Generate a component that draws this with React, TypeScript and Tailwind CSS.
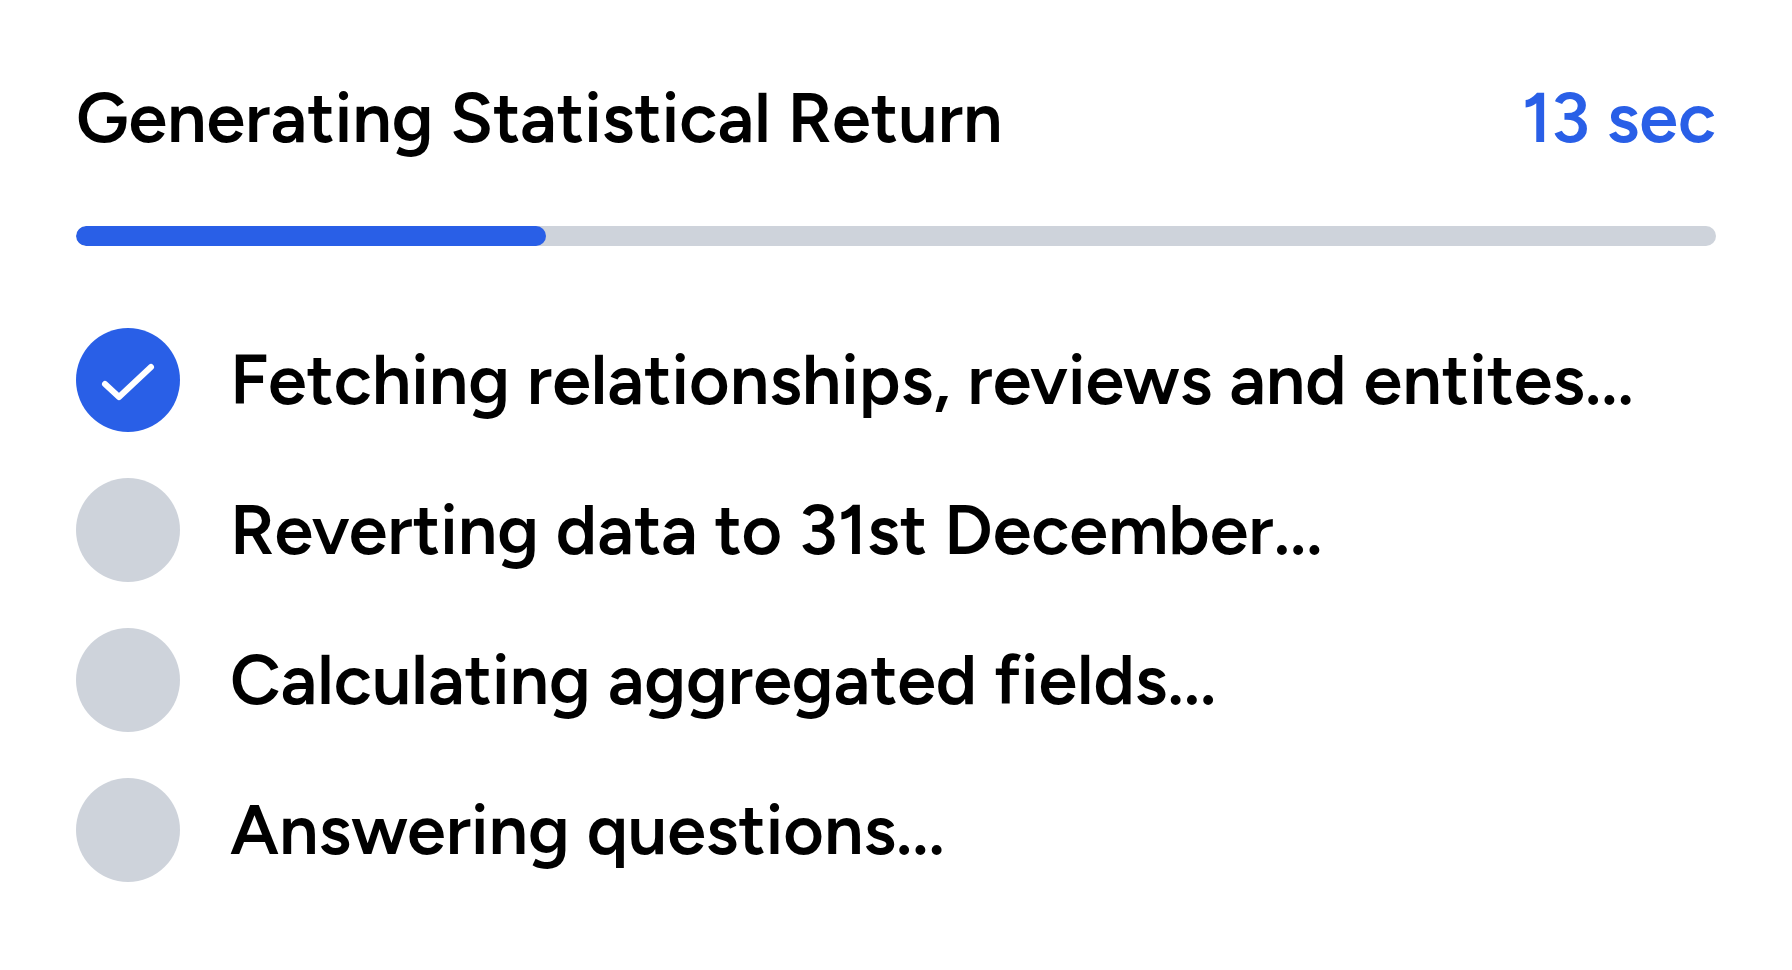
import React from 'react';
import clsx from 'clsx';

const steps = [
    { label: 'Fetching relationships, reviews and entites...', done: true },
    { label: 'Reverting data to 31st December...', done: false },
    { label: 'Calculating aggregated fields...', done: false },
    { label: 'Answering questions...', done: false },
];

const CheckIcon = () => (
    <svg viewBox="0 0 104 104" fill="none" className="size-[104px]" aria-hidden="true">
        <path d="M29 56L43 69L75 39" stroke="white" strokeWidth="6" strokeLinecap="round" strokeLinejoin="round" />
    </svg>
);

const App = () => {
    const progress = 28.65;

    return (
        <main className="min-h-screen bg-white px-[76px] pt-[76px] pb-[88px] font-['Figtree','Lato','Open_Sans',sans-serif] text-[70px] leading-[84px] font-semibold text-black">
            <div className="flex items-center justify-between">
                <h1>Generating Statistical Return</h1>
                <span className="text-[#295fe7]">13 sec</span>
            </div>
            <div
                role="progressbar"
                aria-label="Generating Statistical Return"
                aria-valuenow={Math.round(progress)}
                aria-valuemin={0}
                aria-valuemax={100}
                className="mt-[66px] h-5 overflow-hidden rounded-full bg-[#ced3db]"
            >
                <div className="h-full rounded-full bg-[#295fe7]" style={{ width: `${progress}%` }} />
            </div>
            <ul className="mt-[82px] space-y-[46px]">
                {steps.map((step) => (
                    <li key={step.label} className="flex items-center gap-[50px]">
                        <span
                            className={clsx(
                                'size-[104px] shrink-0 rounded-full',
                                step.done ? 'bg-[#295fe7]' : 'bg-[#ced3db]'
                            )}
                        >
                            {step.done && <CheckIcon />}
                        </span>
                        <span>{step.label}</span>
                    </li>
                ))}
            </ul>
        </main>
    );
};

export default App;
